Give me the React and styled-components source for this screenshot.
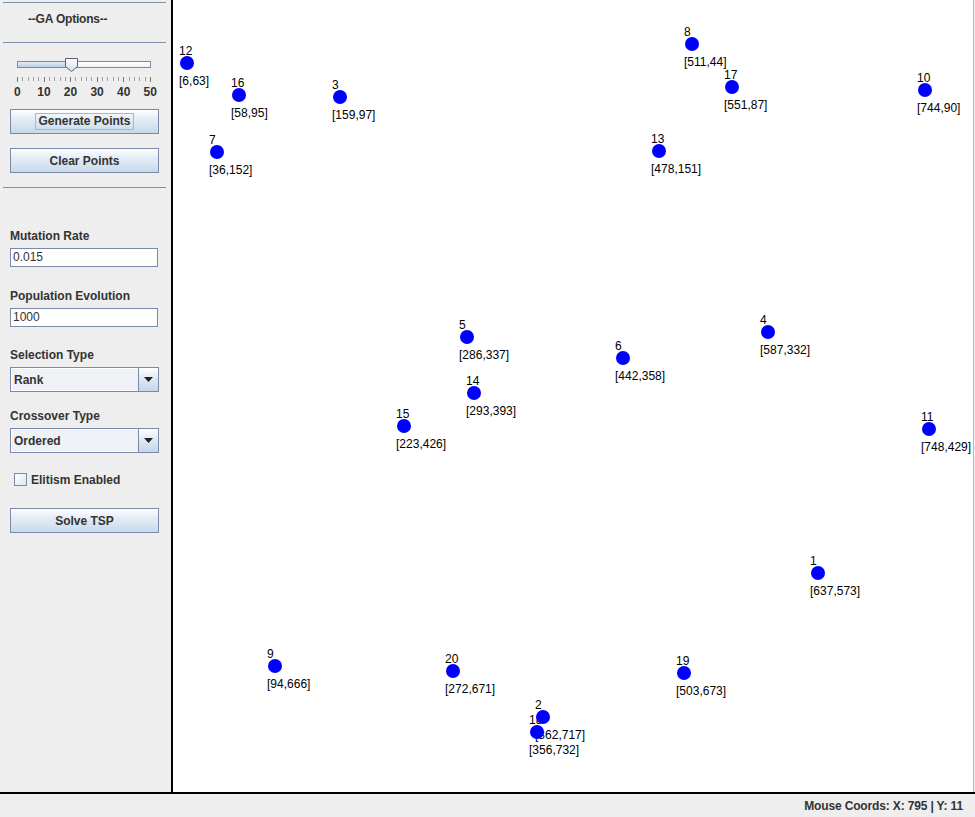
import React from "react";
import styled, { createGlobalStyle } from "styled-components";

const GlobalStyle = createGlobalStyle`
  html, body {
    margin: 0;
    padding: 0;
    background: #eeeeee;
  }
  * {
    box-sizing: border-box;
  }
`;

const POINTS = [
  { id: 12, x: 6, y: 63 },
  { id: 16, x: 58, y: 95 },
  { id: 3, x: 159, y: 97 },
  { id: 7, x: 36, y: 152 },
  { id: 8, x: 511, y: 44 },
  { id: 17, x: 551, y: 87 },
  { id: 10, x: 744, y: 90 },
  { id: 13, x: 478, y: 151 },
  { id: 5, x: 286, y: 337 },
  { id: 14, x: 293, y: 393 },
  { id: 15, x: 223, y: 426 },
  { id: 6, x: 442, y: 358 },
  { id: 4, x: 587, y: 332 },
  { id: 11, x: 748, y: 429 },
  { id: 1, x: 637, y: 573 },
  { id: 9, x: 94, y: 666 },
  { id: 20, x: 272, y: 671 },
  { id: 19, x: 503, y: 673 },
  { id: 2, x: 362, y: 717 },
  { id: 18, x: 356, y: 732 },
];

const Window = styled.div`
  width: 975px;
  height: 817px;
  display: flex;
  flex-direction: column;
  background: #eeeeee;
  font-family: "Liberation Sans", Arial, sans-serif;
  font-size: 12px;
  color: #333333;
  overflow: hidden;
`;

const Main = styled.div`
  flex: 0 0 794px;
  display: flex;
  border-bottom: 2px solid #000;
`;

const Sidebar = styled.div`
  width: 171px;
  flex: 0 0 171px;
  display: flex;
  flex-direction: column;
  padding-top: 2px;
`;

const Separator = styled.div`
  height: 1px;
  margin: ${({ $top }) => $top || 0}px 5px 0 3px;
  background: #7f8fac;
`;

const Title = styled.div`
  margin-top: 9px;
  padding-left: 28px;
  height: 14px;
  line-height: 14px;
  font-weight: bold;
  letter-spacing: -0.2px;
`;

const SliderBox = styled.div`
  position: relative;
  width: 134px;
  height: 16px;
  margin: 14px 0 0 17px;
`;

const Track = styled.div`
  margin-top: 4px;
  height: 7px;
  border: 1px solid #7a8aa8;
  background: linear-gradient(#ffffff, #eef2f7);
  overflow: hidden;
`;

const TrackFill = styled.div`
  height: 100%;
  background: linear-gradient(#e3ebf5, #b8cfe5);
`;

const Thumb = styled.svg`
  position: absolute;
  top: 0;
  width: 15px;
  height: 16px;
  margin-left: -7px;
`;

const Ticks = styled.div`
  display: flex;
  justify-content: space-between;
  align-items: flex-start;
  width: 134px;
  height: 5px;
  margin: 4px 0 0 17px;
`;

const Tick = styled.div`
  width: 1px;
  height: ${({ $major }) => ($major ? 5 : 4)}px;
  background: ${({ $major }) => ($major ? "#777" : "#a0a0a0")};
`;

const TickLabels = styled.div`
  display: flex;
  margin: 3px 0 0 4px;
  height: 14px;
  line-height: 14px;
  font-weight: bold;
`;

const TickLabel = styled.div`
  width: 26.6px;
  text-align: center;
`;

const Button = styled.div`
  margin: ${({ $top }) => $top}px 0 0 10px;
  width: 149px;
  height: 25px;
  border: 1px solid #7a8aa8;
  background: linear-gradient(#ffffff 0%, #e6eef7 35%, #c8d9ea 100%);
  display: flex;
  align-items: center;
  justify-content: center;
  font-weight: bold;
  color: #333;
`;

const FocusRing = styled.span`
  padding: 1px 2px;
  border: 1px solid #a3b8cc;
  line-height: 13px;
`;

const FieldLabel = styled.div`
  margin: ${({ $top }) => $top}px 0 0 10px;
  height: 14px;
  line-height: 14px;
  font-weight: bold;
`;

const TextInput = styled.div`
  margin: 5px 0 0 10px;
  width: 148px;
  height: 19px;
  border: 1px solid #7a8aa8;
  background: #ffffff;
  padding-left: 2px;
  line-height: 17px;
  color: #333;
`;

const Combo = styled.div`
  margin: 5px 0 0 10px;
  width: 149px;
  height: 25px;
  border: 1px solid #7a8aa8;
  display: flex;
  background: #eef1f5;
`;

const ComboValue = styled.div`
  flex: 1;
  padding-left: 2px;
  line-height: 23px;
  font-weight: bold;
  border: 1px solid #ffffff;
  border-right: 0;
`;

const ComboArrow = styled.div`
  width: 20px;
  border-left: 1px solid #7a8aa8;
  background: linear-gradient(#ffffff 0%, #e3ecf6 40%, #c4d6e9 100%);
  display: flex;
  align-items: center;
  justify-content: center;
`;

const CheckRow = styled.div`
  margin: 20px 0 0 14px;
  display: flex;
  align-items: center;
  gap: 4px;
  height: 13px;
  font-weight: bold;
`;

const CheckBox = styled.div`
  width: 13px;
  height: 13px;
  border: 1px solid #7a8aa8;
  background: linear-gradient(135deg, #ffffff, #dce6f1);
`;

const Canvas = styled.div`
  flex: 1;
  background: #ffffff;
  border-left: 2px solid #000;
  border-right: 1px solid #c6b8b0;
  margin-right: 1px;
`;

const Plot = styled.svg`
  display: block;
  font-family: "Liberation Sans", Arial, sans-serif;
  font-size: 12px;
`;

const StatusBar = styled.div`
  flex: 1;
  display: flex;
  align-items: center;
  justify-content: flex-end;
  padding-right: 12px;
  font-weight: bold;
  color: #333;
  letter-spacing: -0.15px;
`;

const SLIDER_VALUE = 20;

const Slider = () => {
  const pct = (SLIDER_VALUE / 50) * 100;
  return (
    <>
      <SliderBox>
        <Track>
          <TrackFill style={{ width: `${pct}%` }} />
        </Track>
        <Thumb style={{ left: `${pct}%` }} viewBox="0 0 15 16">
          <defs>
            <linearGradient id="thumbGrad" x1="0" y1="0" x2="0" y2="1">
              <stop offset="0" stopColor="#ffffff" />
              <stop offset="1" stopColor="#d6dde6" />
            </linearGradient>
          </defs>
          <path
            d="M1.5 1.5 H13.5 V9.5 L7.5 14.5 L1.5 9.5 Z"
            fill="url(#thumbGrad)"
            stroke="#5a6070"
            strokeWidth="1"
          />
        </Thumb>
      </SliderBox>
      <Ticks>
        {Array.from({ length: 26 }).map((_, i) => (
          <Tick key={i} $major={i % 5 === 0} />
        ))}
      </Ticks>
      <TickLabels>
        {[0, 10, 20, 30, 40, 50].map((v) => (
          <TickLabel key={v}>{v}</TickLabel>
        ))}
      </TickLabels>
    </>
  );
};

const DownArrow = () => (
  <svg width="9" height="5" viewBox="0 0 9 5">
    <path d="M0 0 H9 L4.5 5 Z" fill="#222" />
  </svg>
);

const App = () => (
  <Window>
    <GlobalStyle />
    <Main>
      <Sidebar>
        <Separator />
        <Title>--GA Options--</Title>
        <Separator $top={16} />
        <Slider />
        <Button $top={10}>
          <FocusRing>Generate Points</FocusRing>
        </Button>
        <Button $top={14}>Clear Points</Button>
        <Separator $top={14} />

        <FieldLabel $top={41}>Mutation Rate</FieldLabel>
        <TextInput>0.015</TextInput>

        <FieldLabel $top={22}>Population Evolution</FieldLabel>
        <TextInput>1000</TextInput>

        <FieldLabel $top={21}>Selection Type</FieldLabel>
        <Combo>
          <ComboValue>Rank</ComboValue>
          <ComboArrow>
            <DownArrow />
          </ComboArrow>
        </Combo>

        <FieldLabel $top={17}>Crossover Type</FieldLabel>
        <Combo>
          <ComboValue>Ordered</ComboValue>
          <ComboArrow>
            <DownArrow />
          </ComboArrow>
        </Combo>

        <CheckRow>
          <CheckBox />
          Elitism Enabled
        </CheckRow>

        <Button $top={22}>Solve TSP</Button>
      </Sidebar>

      <Canvas>
        <Plot width="799" height="792">
          {POINTS.map((p) => (
            <g key={`t${p.id}`} fill="#000">
              <text x={p.x} y={p.y - 8}>
                {p.id}
              </text>
              <text x={p.x} y={p.y + 22}>
                [{p.x},{p.y}]
              </text>
            </g>
          ))}
          {POINTS.map((p) => (
            <circle key={`c${p.id}`} cx={p.x + 8} cy={p.y} r="7" fill="#0000ff" />
          ))}
        </Plot>
      </Canvas>
    </Main>
    <StatusBar>Mouse Coords: X: 795 | Y: 11</StatusBar>
  </Window>
);

export default App;
